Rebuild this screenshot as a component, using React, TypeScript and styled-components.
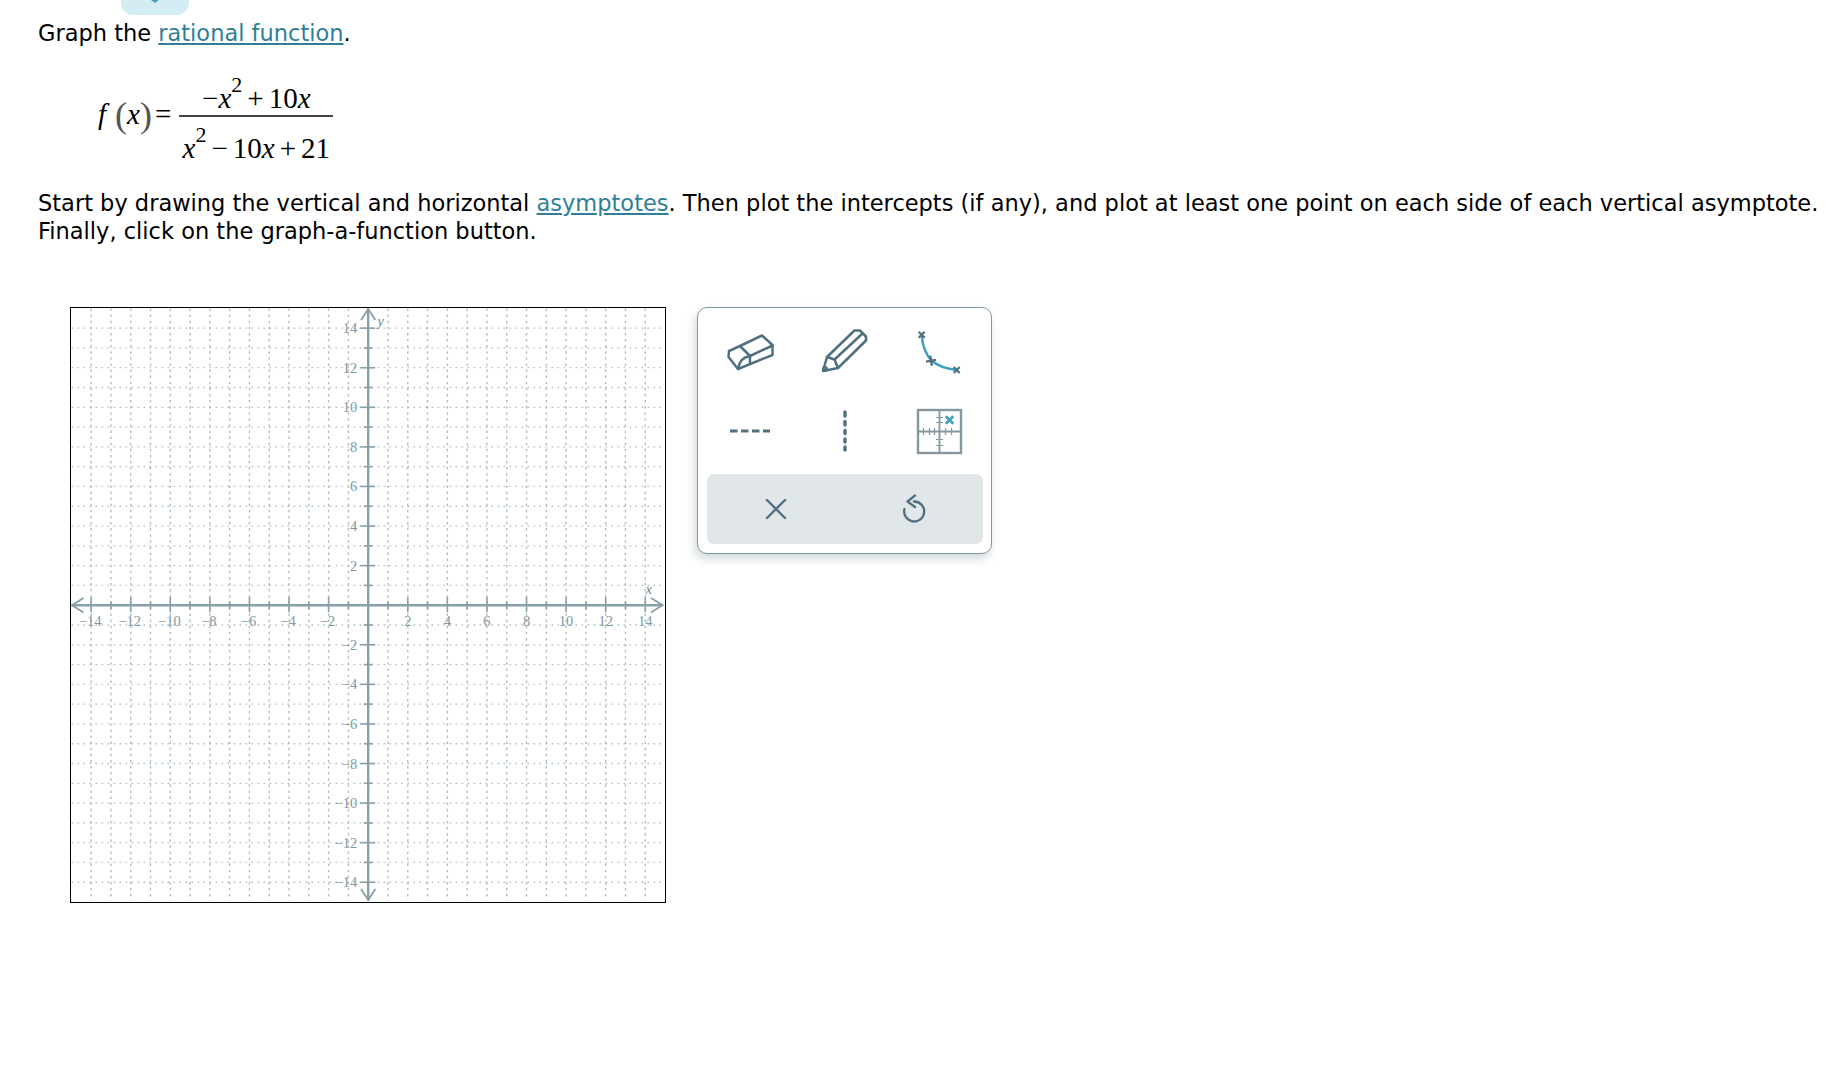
import React from 'react';
import styled, { createGlobalStyle } from 'styled-components';

const UNIT = 19.79;
const OX = 298.7;
const OY = 298.7;
const SIZE = 596;
const UNITS = Array.from({ length: 29 }, (_, i) => i - 14);

const GlobalStyle = createGlobalStyle`
  html, body { margin: 0; padding: 0; background: #fff; }
  body { font-family: "DejaVu Sans", Verdana, sans-serif; color: #000; }
`;

const Page = styled.div`
  width: 1842px;
  height: 1092px;
  padding-left: 38px;
  box-sizing: border-box;
  overflow: hidden;
`;

const TopTab = styled.div`
  width: 68px;
  height: 15px;
  margin-left: 83px;
  background: #d3edf3;
  border-radius: 0 0 12px 12px;
  display: flex;
  justify-content: center;
  align-items: flex-start;
`;

const Prompt = styled.p`
  margin: 0;
  font-size: 22.5px;
  line-height: 28px;
`;

const IntroPrompt = styled(Prompt)`
  margin-top: 4px;
`;

const InstructionPrompt = styled(Prompt)`
  margin-top: 27px;
  white-space: nowrap;
`;

const TermLink = styled.a`
  color: #2f7f97;
  text-decoration: underline;
  text-underline-offset: 2px;
`;

const Formula = styled.div`
  display: flex;
  align-items: center;
  margin: 20px 0 0 60px;
  height: 95px;
  font-family: "Liberation Serif", "Times New Roman", serif;
  font-size: 29px;
  white-space: nowrap;
`;

const Name = styled.span`
  font-style: italic;
`;

const FunctionName = styled(Name)`
  margin-right: 9px;
`;

const Paren = styled.span`
  color: #555;
  font-size: 36px;
  font-weight: 300;
`;

const Equals = styled.span`
  margin: 0 8px 0 3px;
`;

const Fraction = styled.div`
  display: flex;
  flex-direction: column;
  align-items: center;
  width: 154px;
`;

const Numerator = styled.div`
  height: 48px;
  line-height: 62px;
  width: 100%;
  text-align: center;
  border-bottom: 2px solid #444;
  box-sizing: content-box;
`;

const Denominator = styled.div`
  height: 46px;
  line-height: 62px;
  width: 100%;
  text-align: center;
`;

const Power = styled.sup`
  font-size: 22px;
  line-height: 0;
  vertical-align: 16px;
`;

const Op = styled.span`
  margin: 0 5px;
`;

const Workspace = styled.div`
  display: flex;
  align-items: flex-start;
  gap: 31px;
  margin: 62px 0 0 32px;
`;

const GraphFrame = styled.div`
  width: ${SIZE}px;
  height: ${SIZE}px;
  box-sizing: border-box;
  border: 1.5px solid #000;
  flex: none;
`;

const GraphSvg = styled.svg`
  display: block;
`;

const GridLine = styled.line<{ $vertical?: boolean }>`
  stroke: #aebfc3;
  stroke-width: ${p => (p.$vertical ? 1.4 : 1.3)};
  stroke-dasharray: ${p => (p.$vertical ? '2.5 3.6' : '1.6 4.4')};
`;

const AxisLine = styled.line`
  stroke: #88a0aa;
  stroke-width: 2.4;
`;

const Tick = styled.line`
  stroke: #88a0aa;
  stroke-width: 1.6;
`;

const Arrow = styled.polyline`
  fill: none;
  stroke: #88a0aa;
  stroke-width: 1.8;
`;

const AxisLabel = styled.text`
  font-family: "Liberation Serif", "Times New Roman", serif;
  font-size: 14.5px;
  fill: #8199a3;
`;

const AxisName = styled(AxisLabel)`
  font-style: italic;
  fill: #71868f;
`;

const Panel = styled.div`
  width: 295px;
  height: 247px;
  box-sizing: border-box;
  padding: 5px 3px 0 4px;
  border: 1px solid #7f98a3;
  border-radius: 10px;
  background: #fff;
  box-shadow: -2px 5px 10px rgba(90, 115, 125, 0.28);
  flex: none;
`;

const ToolGrid = styled.div`
  display: grid;
  grid-template-columns: repeat(3, 95px);
  grid-auto-rows: 78.5px;
`;

const ToolCell = styled.div`
  display: flex;
  align-items: center;
  justify-content: center;
`;

const ActionBar = styled.div`
  display: grid;
  grid-template-columns: 1fr 1fr;
  height: 70px;
  margin: 4px 5px 0 5px;
  background: #e1e6e8;
  border-radius: 7px;
`;

const Stroke = styled.g<{ $w?: number }>`
  fill: none;
  stroke: #507080;
  stroke-width: ${p => p.$w ?? 2.5};
  stroke-linecap: round;
  stroke-linejoin: round;
`;

function AxisGraph() {
  const majors = UNITS.filter(n => n !== 0 && n % 2 === 0);
  const minors = UNITS.filter(n => n !== 0 && n % 2 !== 0);
  const px = (n: number) => OX + n * UNIT;
  const py = (n: number) => OY - n * UNIT;
  const text = (n: number) => (n < 0 ? `\u2212${-n}` : `${n}`);

  return (
    <GraphFrame>
      <GraphSvg width={593} height={593} viewBox="1.5 1.5 593 593">
        {UNITS.map(n => (
          <GridLine key={`h${n}`} x1={2} x2={594} y1={py(n)} y2={py(n)} />
        ))}
        {UNITS.map(n => (
          <GridLine key={`v${n}`} $vertical x1={px(n)} x2={px(n)} y1={2} y2={594} />
        ))}
        {minors.map(n => (
          <g key={`m${n}`}>
            <Tick x1={px(n)} x2={px(n)} y1={OY - 4} y2={OY + 4} />
            <Tick x1={OX - 4.5} x2={OX + 4.5} y1={py(n)} y2={py(n)} />
          </g>
        ))}
        {majors.map(n => (
          <g key={`j${n}`}>
            <Tick x1={px(n)} x2={px(n)} y1={OY - 8} y2={OY + 7} />
            <Tick x1={OX - 8} x2={OX + 7} y1={py(n)} y2={py(n)} />
            <AxisLabel x={px(n) - (n < 0 ? 1 : 0)} y={OY + 21} textAnchor="middle">{text(n)}</AxisLabel>
            <AxisLabel x={OX - 11} y={py(n) + 5} textAnchor="end">{text(n)}</AxisLabel>
          </g>
        ))}
        <AxisLine x1={2} x2={593} y1={OY} y2={OY} />
        <AxisLine x1={OX} x2={OX} y1={2} y2={594} />
        <Arrow points="14,291.5 2.5,298.7 14,305.9" />
        <Arrow points="581.5,291.5 593,298.7 581.5,305.9" />
        <Arrow points="291.5,13.5 298.7,2.5 305.9,13.5" />
        <Arrow points="291.5,582.5 298.7,593.5 305.9,582.5" />
        <AxisName x={308} y={19}>y</AxisName>
        <AxisName x={576} y={287}>x</AxisName>
      </GraphSvg>
    </GraphFrame>
  );
}

function CrossMark({ x, y, r = 3, color = '#507080', w = 2.2, turn = 0 }: { x: number; y: number; r?: number; color?: string; w?: number; turn?: number }) {
  return (
    <path
      d={`M${x - r} ${y - r}L${x + r} ${y + r}M${x + r} ${y - r}L${x - r} ${y + r}`}
      stroke={color}
      strokeWidth={w}
      fill="none"
      transform={`rotate(${turn} ${x} ${y})`}
    />
  );
}

function EraserIcon() {
  return (
    <svg width={60} height={60} viewBox="5 2 60 60">
      <Stroke>
        <path d="M13.5 37 L14 31 L25 26 L47 15.5 L57.5 25 L57.5 35 L23 49 Z" />
        <path d="M25 26 L35 36 L57.5 25.5" />
        <path d="M35 36 C28 37 24 42 23 49" />
        <path d="M35 36 L35 43" />
      </Stroke>
    </svg>
  );
}

function PencilIcon() {
  return (
    <svg width={60} height={60} viewBox="0 2 60 60">
      <Stroke>
        <path d="M8 51 L12 37 L39.5 10.5 L45 10.5 L51 16.5 L51 20.5 L23 48 Z" />
        <path d="M12 37 L19.5 39.5 L23 48" />
        <path d="M19.5 39.5 L47 14" />
      </Stroke>
      <circle cx={10} cy={49} r={3} fill="#507080" />
    </svg>
  );
}

function CurveIcon() {
  return (
    <svg width={60} height={60} viewBox="5 2 60 60">
      <path d="M16.7 15 C17.5 27 21 35 27 41 C33 46 42 49 51.7 50" fill="none" stroke="#3ea3bf" strokeWidth={2.6} />
      <CrossMark x={16.7} y={14.7} />
      <CrossMark x={26} y={40.7} r={3.6} w={2.4} turn={35} />
      <CrossMark x={51.7} y={50} />
    </svg>
  );
}

function HorizontalDashIcon() {
  return (
    <svg width={60} height={60} viewBox="0 0 60 60">
      <line x1={10} x2={50} y1={30} y2={30} stroke="#507080" strokeWidth={3.2} strokeDasharray="7.5 3.5" />
    </svg>
  );
}

function VerticalDashIcon() {
  return (
    <svg width={60} height={60} viewBox="0 0 60 60">
      <Stroke $w={3.4}>
        <path d="M30 11V15M30 20.5V24M30 29.5V32.5M30 38V41M30 46V49" />
      </Stroke>
    </svg>
  );
}

function GraphButtonIcon() {
  const gray = '#85989f';
  return (
    <svg width={60} height={60} viewBox="0 0 60 60">
      <rect x={8} y={9} width={43} height={43} fill="none" stroke={gray} strokeWidth={2.4} />
      <path d="M29.5 9V52M8 30.5H51" stroke={gray} strokeWidth={1.8} fill="none" />
      <path d="M13.5 27V34M19.5 27V34M24.5 27V34M35.5 27V34M41.5 27V34M26 16.5H33M26 21.5H33M26 38.5H33M26 44.5H33" stroke={gray} strokeWidth={1.2} fill="none" />
      <CrossMark x={39.5} y={19} r={3.8} color="#3ea3bf" w={2.8} />
    </svg>
  );
}

function CloseIcon() {
  return (
    <svg width={24} height={24} viewBox="0 0 24 24">
      <Stroke $w={2.4}>
        <path d="M3 3L21 21M21 3L3 21" />
      </Stroke>
    </svg>
  );
}

function UndoIcon() {
  return (
    <svg width={28} height={30} viewBox="0 0 28 30">
      <Stroke $w={2.3}>
        <path d="M14 7.5 A10 10 0 1 1 4.5 15" />
        <path d="M15 1.5 L7.5 7.5 L15 13" />
      </Stroke>
    </svg>
  );
}

export default function App() {
  return (
    <Page>
      <GlobalStyle />
      <TopTab>
        <svg width={12} height={4} viewBox="0 0 12 4">
          <path d="M2 0 L6 3 L10 0" fill="#3ea3c4" />
        </svg>
      </TopTab>
      <IntroPrompt>
        Graph the <TermLink>rational function</TermLink>.
      </IntroPrompt>
      <Formula>
        <FunctionName>f</FunctionName>
        <Paren>(</Paren>
        <Name>x</Name>
        <Paren>)</Paren>
        <Equals>=</Equals>
        <Fraction>
          <Numerator>
            −<Name>x</Name><Power>2</Power><Op>+</Op>10<Name>x</Name>
          </Numerator>
          <Denominator>
            <Name>x</Name><Power>2</Power><Op>−</Op>10<Name>x</Name><Op>+</Op>21
          </Denominator>
        </Fraction>
      </Formula>
      <InstructionPrompt>
        Start by drawing the vertical and horizontal <TermLink>asymptotes</TermLink>. Then plot the intercepts (if any), and plot at least one point on each side of each vertical asymptote.
        <br />
        Finally, click on the graph-a-function button.
      </InstructionPrompt>
      <Workspace>
        <AxisGraph />
        <Panel>
          <ToolGrid>
            <ToolCell><EraserIcon /></ToolCell>
            <ToolCell><PencilIcon /></ToolCell>
            <ToolCell><CurveIcon /></ToolCell>
            <ToolCell><HorizontalDashIcon /></ToolCell>
            <ToolCell><VerticalDashIcon /></ToolCell>
            <ToolCell><GraphButtonIcon /></ToolCell>
          </ToolGrid>
          <ActionBar>
            <ToolCell><CloseIcon /></ToolCell>
            <ToolCell><UndoIcon /></ToolCell>
          </ActionBar>
        </Panel>
      </Workspace>
    </Page>
  );
}
